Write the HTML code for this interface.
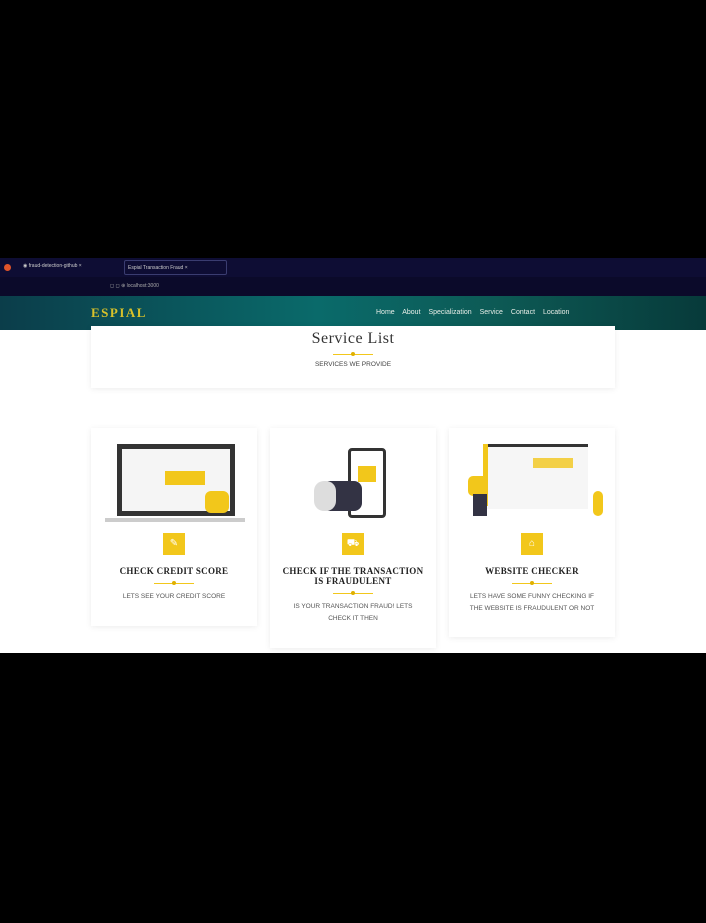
<!DOCTYPE html><html><head><style>
body{margin:0;width:706px;height:923px;background:#000;position:relative;overflow:hidden;font-family:"Liberation Sans",sans-serif}
.a{position:absolute}
.card{position:absolute;background:#fff;box-shadow:0 1px 6px rgba(0,0,0,.08);text-align:center}
.ic{width:22px;height:22px;background:#f2c71b;margin:0 auto;color:#fff;font-size:10px;line-height:22px}
.t{font-family:"Liberation Serif",serif;font-weight:bold;font-size:9px;color:#222;margin-top:11px;letter-spacing:.3px;line-height:10px}
.ln{width:40px;height:1px;background:#f2c71b;margin:7px auto;position:relative}
.ln:after{content:"";position:absolute;left:18px;top:-2px;width:4px;height:4px;background:#e0b000;border-radius:50%}
.d{font-size:6.5px;color:#555;line-height:12px;padding:0 10px}
.ill{height:90px;margin:8px 14px 7px;position:relative}
</style></head><body>
<div class="a" style="left:0;top:258px;width:706px;height:19px;background:#0e0d34"></div>
<div class="a" style="left:4px;top:264px;width:7px;height:7px;border-radius:50%;background:#e0542a"></div>
<div class="a" style="left:23px;top:263px;width:95px;height:8px;font-size:5px;color:#ccc">◉ fraud-detection-github ×</div>
<div class="a" style="left:124px;top:260px;width:103px;height:15px;border:1px solid #3a3c70;border-radius:2px;font-size:5px;color:#ccc;line-height:15px;padding-left:3px;box-sizing:border-box">Espial Transaction Fraud ×</div>
<div class="a" style="left:0;top:277px;width:706px;height:19px;background:#0b0a2a"></div>
<div class="a" style="left:110px;top:283px;font-size:5px;color:#aaa">◻ ◻ ⊕ localhost:3000</div>
<div class="a" style="left:0;top:296px;width:706px;height:34px;background:linear-gradient(90deg,#0b3d4a,#0a6a6a 45%,#0d5a55 70%,#073a3a)"></div>
<div class="a" style="left:91px;top:305px;font-family:'Liberation Serif',serif;font-size:13px;color:#d8c12a;letter-spacing:1.5px;font-weight:bold">ESPIAL</div>
<div class="a" style="left:376px;top:309px;font-size:7px;color:#e8eee8;word-spacing:6px">Home About Specialization Service Contact Location</div>
<div class="a" style="left:0;top:330px;width:706px;height:323px;background:#fff"></div>
<div class="card" style="left:91px;top:326px;width:524px;height:62px">
<div style="font-family:'Liberation Serif',serif;font-size:16px;color:#333;margin-top:4px;letter-spacing:.5px">Service List</div>
<div class="ln" style="margin:6px auto"></div>
<div style="font-size:6.5px;color:#444">SERVICES WE PROVIDE</div></div>
<div class="card" style="left:91px;top:428px;width:166px;height:198px"><div class="ill"><div class="a" style="left:12px;top:8px;width:118px;height:72px;border:5px solid #333;box-sizing:border-box;background:#f5f5f5"></div><div class="a" style="left:60px;top:35px;width:40px;height:14px;background:#f2c71b"></div><div class="a" style="left:100px;top:55px;width:24px;height:22px;background:#f2c71b;border-radius:6px"></div><div class="a" style="left:0;top:82px;width:140px;height:4px;background:#ccc"></div></div><div class="ic">✎</div><div class="t">CHECK CREDIT SCORE</div><div class="ln"></div><div class="d">LETS SEE YOUR CREDIT SCORE</div></div>
<div class="card" style="left:270px;top:428px;width:166px;height:220px"><div class="ill"><div class="a" style="left:64px;top:12px;width:38px;height:70px;border:3px solid #333;border-radius:4px;box-sizing:border-box"></div><div class="a" style="left:74px;top:30px;width:18px;height:16px;background:#f2c71b"></div><div class="a" style="left:38px;top:45px;width:40px;height:30px;background:#334;border-radius:8px"></div><div class="a" style="left:30px;top:45px;width:22px;height:30px;background:#ddd;border-radius:10px"></div></div><div class="ic">⛟</div><div class="t">CHECK IF THE TRANSACTION<br>IS FRAUDULENT</div><div class="ln"></div><div class="d">IS YOUR TRANSACTION FRAUD! LETS<br>CHECK IT THEN</div></div>
<div class="card" style="left:449px;top:428px;width:166px;height:209px"><div class="ill"><div class="a" style="left:20px;top:8px;width:105px;height:62px;border-top:3px solid #333;background:#f6f6f6"></div><div class="a" style="left:20px;top:8px;width:5px;height:62px;background:#f2c71b"></div><div class="a" style="left:70px;top:22px;width:40px;height:10px;background:#f2c71b;opacity:.8"></div><div class="a" style="left:5px;top:40px;width:20px;height:20px;background:#f2c71b;border-radius:5px"></div><div class="a" style="left:10px;top:58px;width:14px;height:22px;background:#334"></div><div class="a" style="left:130px;top:55px;width:10px;height:25px;background:#f2c71b;border-radius:5px"></div></div><div class="ic">⌂</div><div class="t">WEBSITE CHECKER</div><div class="ln"></div><div class="d">LETS HAVE SOME FUNNY CHECKING IF<br>THE WEBSITE IS FRAUDULENT OR NOT</div></div>
</body></html>
